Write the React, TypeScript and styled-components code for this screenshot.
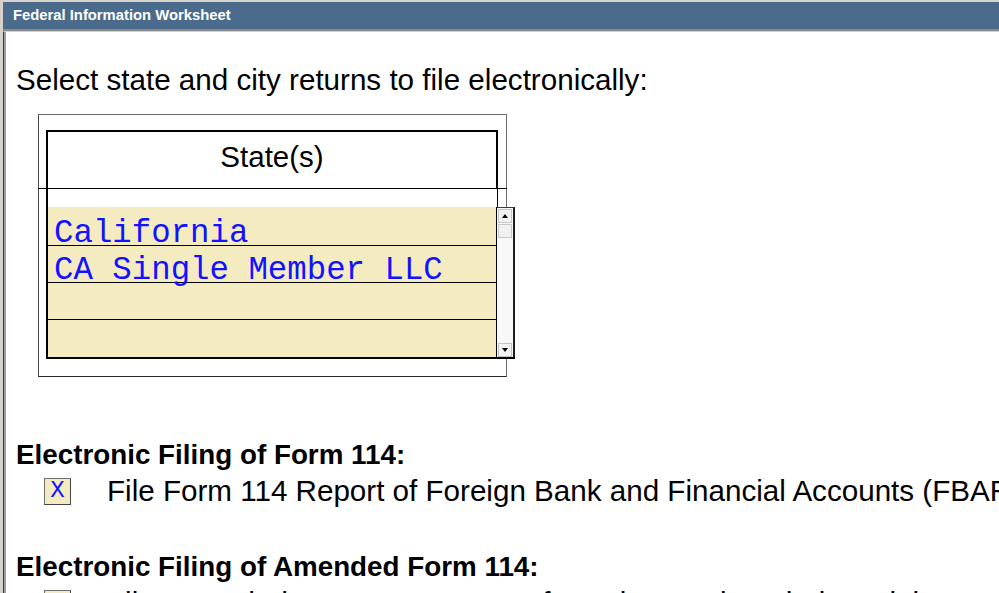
import React from "react";
import styled, { createGlobalStyle } from "styled-components";

const states = ["California", "CA Single Member LLC", "", ""];

const filings = [
  {
    heading: "Electronic Filing of Form 114:",
    label: "File Form 114 Report of Foreign Bank and Financial Accounts (FBAR)",
    checked: true,
  },
  {
    heading: "Electronic Filing of Amended Form 114:",
    label: "File Amended Form 114 Report of Foreign Bank and Financial Accounts (FBAR)",
    checked: false,
  },
];

const App = () => {
  return (
    <Frame>
      <GlobalStyle />
      <TitleBar>Federal Information Worksheet</TitleBar>
      <Content>
        <Prompt>Select state and city returns to file electronically:</Prompt>
        <StateBox>
          <HeaderCell>State(s)</HeaderCell>
          <Rule />
          <Spacer />
          <ListBox>
            <Rows>
              {states.map((name, i) => (
                <StateRow key={i} first={i === 0} last={i === states.length - 1}>
                  {name}
                </StateRow>
              ))}
            </Rows>
            <ScrollBar>
              <ScrollButton>
                <Arrow up />
              </ScrollButton>
              <Thumb />
              <Track />
              <ScrollButton>
                <Arrow />
              </ScrollButton>
            </ScrollBar>
          </ListBox>
        </StateBox>
        {filings.map((f, i) => (
          <Section key={i} first={i === 0}>
            <Heading>{f.heading}</Heading>
            <CheckRow>
              <CheckBox>{f.checked ? "X" : ""}</CheckBox>
              <Label>{f.label}</Label>
            </CheckRow>
          </Section>
        ))}
      </Content>
    </Frame>
  );
};

const GlobalStyle = createGlobalStyle`
  html, body {
    margin: 0;
    padding: 0;
    background: #fff;
  }
  body {
    font-family: "Liberation Sans", Arial, sans-serif;
    overflow: hidden;
  }
`;

const Frame = styled.div`
  width: 999px;
  height: 593px;
  box-sizing: border-box;
  padding: 2px 0 0 3px;
  background: #d6d2ca;
  display: flex;
  flex-direction: column;
  overflow: hidden;
`;

const TitleBar = styled.div`
  height: 27px;
  line-height: 27px;
  padding-left: 10px;
  background: #4a6b8c;
  color: #fff;
  font-weight: bold;
  font-size: 14.8px;
  border-bottom: 2px solid #8a8a8a;
  white-space: nowrap;
`;

const Content = styled.div`
  flex: 1;
  background: #fff;
  border-top: 1px solid #cfcfcf;
  border-left: 1px solid #3c3c3c;
  box-shadow: inset 2px 0 0 #9c9c9c;
  padding: 31px 0 0 12px;
  white-space: nowrap;
  overflow: hidden;
  color: #000;
`;

const Prompt = styled.div`
  font-size: 29.6px;
  line-height: 34px;
`;

const StateBox = styled.div`
  margin: 17px 0 0 22px;
  width: 469px;
  height: 263px;
  box-sizing: border-box;
  border: 1px solid #6c6c6c;
  border-bottom-color: #2a2a2a;
  border-left-color: #4a4a4a;
  padding-top: 15px;
`;

const HeaderCell = styled.div`
  margin-left: 7px;
  width: 452px;
  height: 58px;
  box-sizing: border-box;
  border: 2px solid #000;
  border-bottom: none;
  padding-top: 8px;
  text-align: center;
  font-size: 29.5px;
  line-height: 34px;
`;

const Rule = styled.div`
  height: 1px;
  margin: 0 -1px;
  background: #000;
`;

const Spacer = styled.div`
  margin-left: 7px;
  width: 452px;
  height: 18px;
  box-sizing: border-box;
  border-left: 2px solid #000;
  border-right: 1px solid #000;
`;

const ListBox = styled.div`
  margin-left: 7px;
  width: 469px;
  display: flex;
  box-sizing: border-box;
  border-left: 2px solid #000;
  border-bottom: 2px solid #000;
`;

const Rows = styled.div`
  flex: 1;
  border-right: 1px solid #000;
`;

const StateRow = styled.div<{ first?: boolean; last?: boolean }>`
  height: ${(p) => (p.first ? "39px" : "37px")};
  box-sizing: border-box;
  background: #f4ecc0;
  border-bottom: ${(p) => (p.last ? "none" : "1px solid #000")};
  padding: ${(p) => (p.first ? "11px" : "9px")} 0 0 6px;
  font-family: "Liberation Mono", "Courier New", monospace;
  font-size: 32.4px;
  line-height: 32px;
  color: #1212ff;
`;

const ScrollBar = styled.div`
  width: 18px;
  display: flex;
  flex-direction: column;
  box-sizing: border-box;
  border-top: 1px solid #3a3a3a;
  border-right: 2px solid #1e1e1e;
  background: repeating-conic-gradient(#f4f4f4 0% 25%, #fbfbfb 0% 50%) 0 0 / 2px 2px;
`;

const ScrollButton = styled.div`
  height: 14px;
  margin: 1px 0 0 1px;
  width: 14px;
  box-sizing: border-box;
  background: #f2f2f2;
  border: 1px solid #c4c4c4;
  display: flex;
  align-items: center;
  justify-content: center;
`;

const Arrow = styled.div<{ up?: boolean }>`
  width: 0;
  height: 0;
  border-left: 3.5px solid transparent;
  border-right: 3.5px solid transparent;
  ${(p) => (p.up ? "border-bottom: 4px solid #000;" : "border-top: 4px solid #000;")}
`;

const Thumb = styled.div`
  height: 14px;
  width: 14px;
  margin: 1px 0 0 1px;
  box-sizing: border-box;
  background: #f0f0f0;
  border: 1px solid #c8c8c8;
`;

const Track = styled.div`
  flex: 1;
`;

const Section = styled.div<{ first?: boolean }>`
  margin-top: ${(p) => (p.first ? "62px" : "43px")};
`;

const Heading = styled.div`
  font-weight: bold;
  font-size: 27.8px;
  line-height: 32px;
`;

const CheckRow = styled.div`
  display: flex;
  align-items: center;
  height: 34px;
  margin-top: 3px;
  padding-left: 28px;
  gap: 36px;
`;

const CheckBox = styled.div`
  width: 27px;
  height: 27px;
  box-sizing: border-box;
  flex-shrink: 0;
  background: #f4ecc0;
  border: 1px solid #6e6e6e;
  border-right-color: #444;
  border-bottom-color: #444;
  display: flex;
  align-items: center;
  justify-content: center;
  font-family: "Liberation Mono", "Courier New", monospace;
  font-size: 24px;
  line-height: 24px;
  color: #1212ff;
`;

const Label = styled.div`
  font-size: 29.6px;
  line-height: 34px;
`;

export default App;
